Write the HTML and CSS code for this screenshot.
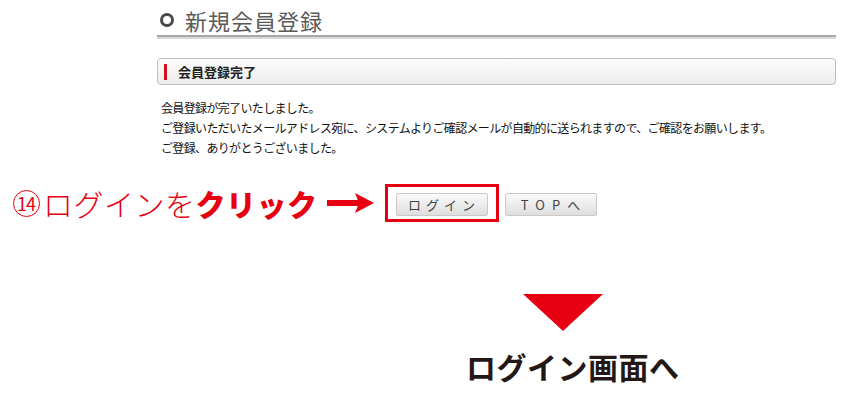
FILE: index.html
```html
<!DOCTYPE html>
<html lang="ja">
<head>
<meta charset="utf-8">
<link rel="stylesheet" href="styles.css">
</head>
<body>
<div class="main">
  <h1 class="title"><span class="ring"></span>新規会員登録</h1>
  <div class="box"><span class="bar"></span>会員登録完了</div>
  <p class="msg">会員登録が完了いたしました。<br>ご登録いただいたメールアドレス宛に、システムよりご確認メールが自動的に送られますので、ご確認をお願いします。<br>ご登録、ありがとうございました。</p>
</div>
<div class="callout">
  <span class="num">14</span>
  <span class="note">ログインを<b>クリック</b></span>
  <svg class="arrow" width="48" height="22" viewBox="0 0 48 22"><rect x="0" y="8" width="34" height="6" fill="#e60012"/><polygon points="28,1 47,11 28,21 32,11" fill="#e60012"/></svg>
  <div class="hl"><span class="btn">ログイン</span></div>
  <span class="btn top">TOPへ</span>
</div>
<div class="down">
  <div class="tri"></div>
  <div class="next">ログイン画面へ</div>
</div>
</body>
</html>
```

FILE: styles.css
```css
body {
  margin: 0;
  background: #fff;
  font-family: "Noto Sans CJK JP", "Noto Sans", sans-serif;
  color: #222;
}
.main {
  margin-left: 157px;
  width: 679px;
}
.title {
  margin: 0;
  padding-top: 4px;
  height: 31px;
  line-height: 30px;
  font-size: 22px;
  font-weight: 400;
  color: #5a5a5a;
  letter-spacing: 1px;
  display: flex;
  align-items: center;
  border-bottom: 2px solid #a8a8a8;
  box-shadow: 0 2px 0 #d8d8d8;
  box-sizing: content-box;
}
.ring {
  width: 8px;
  height: 8px;
  border: 3px solid #4a4a4a;
  border-radius: 50%;
  margin: 0 11px 0 3px;
}
.box {
  margin-top: 21px;
  height: 25px;
  border: 1px solid #bdbdbd;
  border-radius: 4px;
  background: linear-gradient(#fcfcfc, #ececec);
  display: flex;
  align-items: center;
  font-size: 13px;
  font-weight: 700;
  color: #222;
}
.bar {
  width: 3px;
  height: 16px;
  background: #d0121b;
  margin: 0 11px 0 6px;
}
.msg {
  margin: 13px 0 0 4px;
  font-size: 12px;
  line-height: 20px;
  letter-spacing: -0.65px;
  color: #111;
}
.callout {
  margin-top: 26px;
  padding-left: 13px;
  display: flex;
  align-items: center;
}
.num {
  width: 25px;
  height: 25px;
  border: 1.5px solid #e60012;
  border-radius: 50%;
  box-sizing: content-box;
  color: #e60012;
  font-size: 18px;
  line-height: 25px;
  letter-spacing: -1px;
  text-indent: -1px;
  text-align: center;
  margin-right: 3px;
}
.note {
  font-size: 30px;
  line-height: 38px;
  font-weight: 300;
  color: #e60012;
  letter-spacing: 0.5px;
}
.note b { font-weight: 900; }
.arrow {
  margin-left: 9px;
}
.hl {
  margin-left: 10px;
  border: 3px solid #e60012;
  padding: 6px 8px 3px;
  display: flex;
}
.btn {
  width: 90px;
  height: 21px;
  border: 1px solid #c9c9c9;
  border-radius: 2px;
  background: linear-gradient(#fafafa, #dedede);
  font-size: 13px;
  line-height: 21px;
  letter-spacing: 5px;
  text-indent: 5px;
  text-align: center;
  color: #444;
}
.top {
  margin-left: 6px;
  margin-top: 2px;
  letter-spacing: 7px;
  text-indent: 7px;
}
.down {
  margin-top: 72px;
  margin-left: 466px;
  width: 214px;
  display: flex;
  flex-direction: column;
}
.tri {
  margin-left: 57px;
  width: 0;
  height: 0;
  border-left: 40px solid transparent;
  border-right: 40px solid transparent;
  border-top: 37px solid #e60012;
}
.next {
  margin-top: 18px;
  font-size: 30px;
  line-height: 34px;
  font-weight: 700;
  color: #231815;
  letter-spacing: 0.5px;
  white-space: nowrap;
}
```
